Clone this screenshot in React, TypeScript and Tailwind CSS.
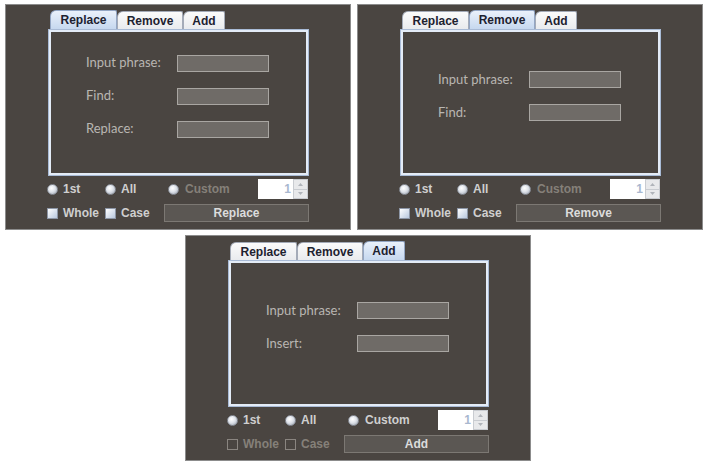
import React from "react";

type PanelProps = {
  active: "Replace" | "Remove" | "Add";
  rows: string[];
  button: string;
  customEnabled?: boolean;
  checksEnabled?: boolean;
};

const TABS = ["Replace", "Remove", "Add"] as const;
const TAB_WIDTHS: Record<string, string> = {
  Replace: "w-[67px]",
  Remove: "w-[66px]",
  Add: "w-[42px]",
};

const Radio = () => (
  <span className="inline-block w-[11px] h-[11px] rounded-full border border-[#8a8f99] bg-[radial-gradient(circle_at_40%_35%,#ffffff_0%,#dfe3ea_45%,#9aa2ae_100%)]" />
);

const Check = ({ enabled }: { enabled: boolean }) =>
  enabled ? (
    <span className="inline-block w-[11px] h-[11px] border border-[#8d96a6] bg-gradient-to-br from-[#ffffff] to-[#b9c8de]" />
  ) : (
    <span className="inline-block w-[11px] h-[11px] border border-[#8a8580]" />
  );

const Panel: React.FC<PanelProps> = ({
  active,
  rows,
  button,
  customEnabled = false,
  checksEnabled = true,
}) => {
  const on = "text-[#cfcfcf]";
  const off = "text-[#858079]";
  return (
    <div className="w-[346px] h-[226px] border border-[#8c8c8c] bg-[#4a4541] pl-[42px] pt-[5px] font-['Liberation_Sans',Arial,sans-serif]">
      {/* tab strip */}
      <div className="flex items-end h-[19px] pl-[2px]">
        {TABS.map((t) =>
          t === active ? (
            <div
              key={t}
              className={`${TAB_WIDTHS[t]} h-[19px] rounded-tl-[6px] rounded-tr-[2px] border border-b-0 border-[#93a6c4] bg-gradient-to-b from-[#eaf1fb] to-[#c6d8ef] text-[12px] font-bold text-[#1d2230] flex items-center justify-center`}
            >
              {t}
            </div>
          ) : (
            <div
              key={t}
              className={`${TAB_WIDTHS[t]} h-[18px] rounded-tl-[6px] rounded-tr-[2px] border border-b-0 border-[#a4abb8] bg-gradient-to-b from-[#fbfbfb] to-[#e9ebee] text-[12px] font-bold text-[#1d2230] flex items-center justify-center`}
            >
              {t}
            </div>
          )
        )}
      </div>

      {/* content box */}
      <div className="w-[261px] h-[147px] border border-[#a9bbd6] p-[2px] bg-[#e4ecf7]">
        <div className="w-full h-full bg-[#4a4541] flex flex-col justify-center gap-[16px] pb-[13px] pl-[35px] font-['Lato',sans-serif] text-[13px] text-[#b9b6b2]">
          {rows.map((r) => (
            <div key={r} className="flex items-center h-[17px]">
              <span className="w-[91px]">{r}</span>
              <span className="w-[92px] h-[17px] border border-[#a9a6a2] bg-[#6f6b67]" />
            </div>
          ))}
        </div>
      </div>

      {/* options row */}
      <div className="flex items-center h-[20px] mt-[3px] -ml-[1px] text-[12px] font-bold">
        <div className="w-[58px] flex items-center gap-[5px]">
          <Radio />
          <span className={on}>1st</span>
        </div>
        <div className="w-[63px] flex items-center gap-[5px]">
          <Radio />
          <span className={on}>All</span>
        </div>
        <div className="w-[90px] flex items-center gap-[6px]">
          <Radio />
          <span className={customEnabled ? on : off}>Custom</span>
        </div>
        <div className="flex h-[20px]">
          <div className="w-[35px] h-full bg-white text-right pr-[2px] text-[12px] font-bold text-[#a9b8cf] leading-[20px]">
            1
          </div>
          <div className="w-[15px] h-full flex flex-col border border-[#c9ccd1]">
            <div className="flex-1 bg-[#e8e9eb] border-b border-[#c9ccd1] flex items-center justify-center">
              <svg width="5" height="3" viewBox="0 0 5 3">
                <path d="M0 3 L2.5 0 L5 3 Z" fill="#b0b4ba" />
              </svg>
            </div>
            <div className="flex-1 bg-[#e8e9eb] flex items-center justify-center">
              <svg width="5" height="3" viewBox="0 0 5 3">
                <path d="M0 0 L2.5 3 L5 0 Z" fill="#b0b4ba" />
              </svg>
            </div>
          </div>
        </div>
      </div>

      {/* checks + action button */}
      <div className="flex items-center h-[18px] mt-[5px] -ml-[1px] text-[12px] font-bold">
        <div className="w-[58px] flex items-center gap-[5px]">
          <Check enabled={checksEnabled} />
          <span className={checksEnabled ? on : off}>Whole</span>
        </div>
        <div className="w-[59px] flex items-center gap-[5px]">
          <Check enabled={checksEnabled} />
          <span className={checksEnabled ? on : off}>Case</span>
        </div>
        <button className="w-[145px] h-[18px] border border-[#7c7873] bg-[#5b5753] text-[#dcdcdc] text-[12px] font-bold leading-none">
          {button}
        </button>
      </div>
    </div>
  );
};

const App: React.FC = () => {
  return (
    <div className="w-[707px] h-[464px] bg-white pt-[4px]">
      <div className="flex gap-[6px] pl-[5px]">
        <Panel
          active="Replace"
          rows={["Input phrase:", "Find:", "Replace:"]}
          button="Replace"
        />
        <Panel active="Remove" rows={["Input phrase:", "Find:"]} button="Remove" />
      </div>
      <div className="pl-[185px] mt-[5px]">
        <Panel
          active="Add"
          rows={["Input phrase:", "Insert:"]}
          button="Add"
          customEnabled
          checksEnabled={false}
        />
      </div>
    </div>
  );
};

export default App;
